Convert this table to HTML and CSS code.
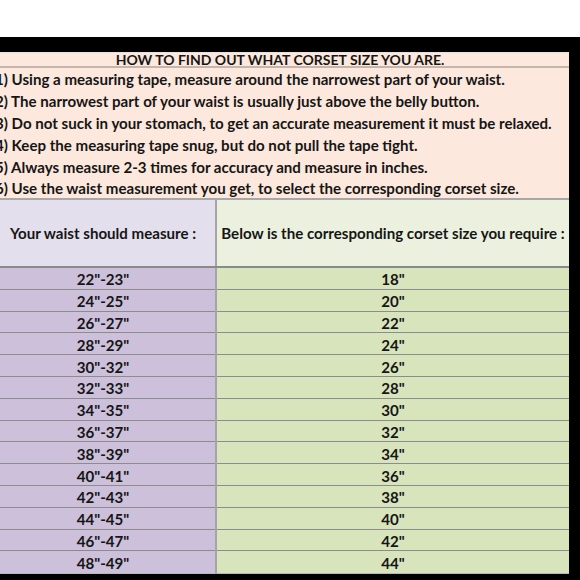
FILE: index.html
```html
<!DOCTYPE html>
<html>
<head>
<meta charset="utf-8">
<link rel="stylesheet" href="styles.css">
</head>
<body>
<div class="topspace"></div>
<div class="frame">
<table class="chart">
  <colgroup><col class="c1"><col class="c2"></colgroup>
  <tr class="title"><td colspan="2">HOW TO FIND OUT WHAT CORSET SIZE YOU ARE.</td></tr>
  <tr class="ins"><td colspan="2">1) Using a measuring tape, measure around the narrowest part of your waist.</td></tr>
  <tr class="ins"><td colspan="2">2) The narrowest part of your waist is usually just above the belly button.</td></tr>
  <tr class="ins"><td colspan="2">3) Do not suck in your stomach, to get an accurate measurement it must be relaxed.</td></tr>
  <tr class="ins"><td colspan="2">4) Keep the measuring tape snug, but do not pull the tape tight.</td></tr>
  <tr class="ins"><td colspan="2">5) Always measure 2-3 times for accuracy and measure in inches.</td></tr>
  <tr class="ins last"><td colspan="2">6) Use the waist measurement you get, to select the corresponding corset size.</td></tr>
  <tr class="head"><td class="l">Your waist should measure :</td><td class="r">Below is the corresponding corset size you require :</td></tr>
  <tr class="row"><td class="l">22"-23"</td><td class="r">18"</td></tr>
  <tr class="row"><td class="l">24"-25"</td><td class="r">20"</td></tr>
  <tr class="row"><td class="l">26"-27"</td><td class="r">22"</td></tr>
  <tr class="row"><td class="l">28"-29"</td><td class="r">24"</td></tr>
  <tr class="row"><td class="l">30"-32"</td><td class="r">26"</td></tr>
  <tr class="row"><td class="l">32"-33"</td><td class="r">28"</td></tr>
  <tr class="row"><td class="l">34"-35"</td><td class="r">30"</td></tr>
  <tr class="row"><td class="l">36"-37"</td><td class="r">32"</td></tr>
  <tr class="row"><td class="l">38"-39"</td><td class="r">34"</td></tr>
  <tr class="row"><td class="l">40"-41"</td><td class="r">36"</td></tr>
  <tr class="row"><td class="l">42"-43"</td><td class="r">38"</td></tr>
  <tr class="row"><td class="l">44"-45"</td><td class="r">40"</td></tr>
  <tr class="row"><td class="l">46"-47"</td><td class="r">42"</td></tr>
  <tr class="row lastrow"><td class="l">48"-49"</td><td class="r">44"</td></tr>
</table>
</div>
</body>
</html>
```
FILE: styles.css
```css
html, body {
  margin: 0;
  padding: 0;
  background: #000;
  width: 580px;
  height: 580px;
  overflow: hidden;
}
.topspace {
  height: 37px;
  background: #fff;
}
.frame {
  padding-top: 15px;
  background: #000;
  height: 528px;
}
.chart {
  margin-left: -9px;
  width: 578px;
  table-layout: fixed;
  border-collapse: collapse;
  font-family: "Lato", "Open Sans", sans-serif;
  font-weight: 700;
  font-size: 15.1px;
  color: #161616;
}
.c1 { width: 225px; }
.c2 { width: 353px; }
.chart td {
  padding: 0;
  white-space: nowrap;
  overflow: hidden;
}
.title td {
  height: 13px;
  background: #fce8dc;
  text-align: center;
  font-size: 14px;
  line-height: 13px;
  border-top: 1px solid #e8e0dc;
  border-bottom: 2px solid #c4b5ad;
}
.ins td {
  height: 22px;
  background: #fce8dc;
  padding-left: 4px;
  line-height: 20px;
}
.ins.last td {
  height: 20px;
  border-bottom: 2px solid #a8a8a8;
}
.head td {
  height: 66px;
  text-align: center;
  border-bottom: 2px solid #8a8a8a;
}
.head .l { background: #e4dfec; border-right: 2px solid #a5a5a5; }
.head .r { background: #ebf1de; }
.row td {
  height: 18.8px;
  padding-top: 2px;
  text-align: center;
  line-height: 18px;
  border-bottom: 1px solid #8c8c8c;
}
.row.lastrow td {
  height: 20px;
  border-bottom: 1px solid #b8b8b8;
}
.row .l { background: #ccc0da; border-right: 2px solid #a5a5a5; }
.row .r { background: #d8e4bc; }
```
